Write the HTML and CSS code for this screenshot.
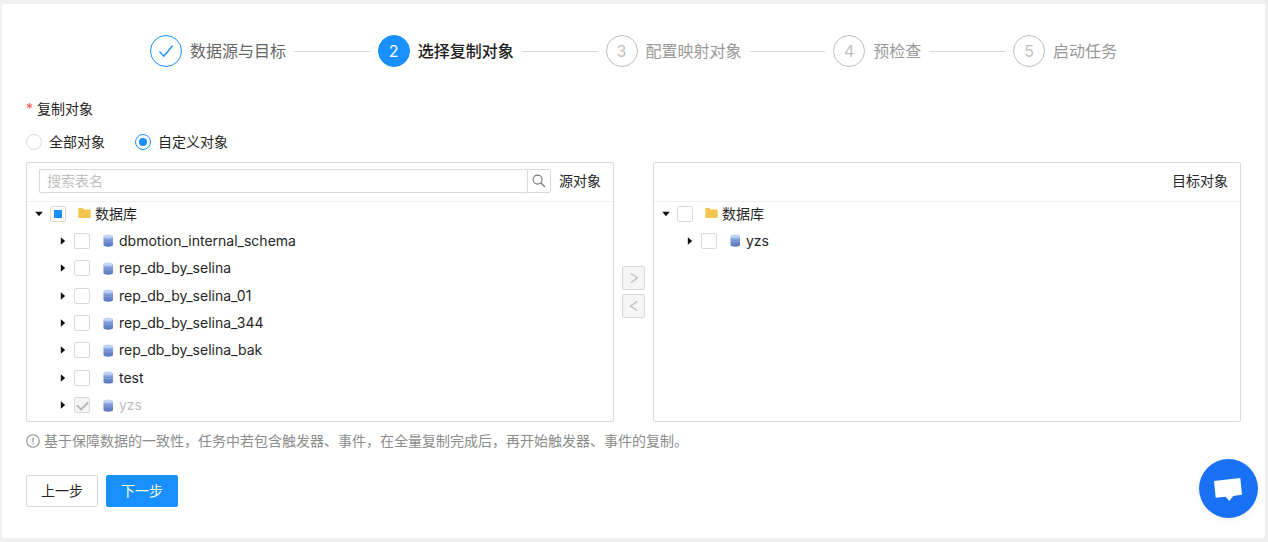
FILE: index.html
```html
<!DOCTYPE html>
<html lang="zh-CN">
<head>
<meta charset="utf-8">
<title>选择复制对象</title>
<link rel="stylesheet" href="styles.css">
</head>
<body>
<svg class="sprite" aria-hidden="true">
  <defs>
    <linearGradient id="dbBody" x1="0" y1="0" x2="0" y2="1">
      <stop offset="0" stop-color="#a9c0ee"/>
      <stop offset="1" stop-color="#5272bd"/>
    </linearGradient>
  </defs>
  <symbol id="db" viewBox="0 0 13 13">
    <path d="M1.500 2.200v8.700c0 2.300 9.500 2.300 9.500 0V2.200z" fill="url(#dbBody)"/>
    <ellipse cx="6.250" cy="2.200" rx="4.750" ry="1.600" fill="#c3d3f5"/>
    <path d="M1.500 5.200c1 1.500 8.500 1.500 9.500 0M1.500 8.100c1 1.500 8.500 1.500 9.500 0" fill="none" stroke="#4c6cb8" stroke-width=".4"/>
  </symbol>
  <symbol id="folder" viewBox="0 0 13 13">
    <path d="M.300 1.700Q.300 1 1 1H4.500L6 2.500H12Q12.700 2.500 12.700 3.200V10.300Q12.700 11 12 11H1Q.300 11 .300 10.300Z" fill="#f2c64f"/>
  </symbol>
  <symbol id="caret" viewBox="0 0 10 10">
    <path d="M2.800 1.200 7.200 5 2.800 8.800Z" fill="#111"/>
  </symbol>
</svg>

<main class="card">
  <ol class="steps">
    <li class="step step-done">
      <span class="step-icon"><svg width="16" height="16" viewBox="0 0 16 16"><path d="M1.500 8.400 5.800 13.200 14.600 2.700" fill="none" stroke="currentColor" stroke-width="1.400"/></svg></span>
      <span class="step-title">数据源与目标</span>
    </li>
    <li class="step step-active"><span class="step-icon">2</span><span class="step-title">选择复制对象</span></li>
    <li class="step"><span class="step-icon">3</span><span class="step-title">配置映射对象</span></li>
    <li class="step"><span class="step-icon">4</span><span class="step-title">预检查</span></li>
    <li class="step"><span class="step-icon">5</span><span class="step-title">启动任务</span></li>
  </ol>

  <form>
    <div class="field-label" id="scope-label"><span class="required">*</span>复制对象</div>
    <div class="radios" role="radiogroup" aria-labelledby="scope-label">
      <label class="option"><input class="radio" type="radio" name="scope">全部对象</label>
      <label class="option"><input class="radio" type="radio" name="scope" checked>自定义对象</label>
    </div>

    <div class="transfer">
      <section class="panel">
        <header class="panel-head">
          <div class="search">
            <input class="search-input" type="text" placeholder="搜索表名" aria-label="搜索表名">
            <button class="search-button" type="button" aria-label="搜索"><svg width="14" height="14" viewBox="0 0 14 14"><path d="M9 9l4 4" stroke="currentColor" stroke-width="1.200"/><circle cx="5.600" cy="5.600" r="4.500" fill="none" stroke="currentColor" stroke-width="1.100"/></svg></button>
          </div>
          <span class="panel-title">源对象</span>
        </header>
        <ul class="tree">
          <li class="node"><button class="toggle open" type="button" aria-label="收起"><svg width="10" height="10"><use href="#caret"/></svg></button><label class="node-label"><input class="check partial" type="checkbox"><svg width="13" height="13"><use href="#folder"/></svg>数据库</label></li>
          <li class="node child"><button class="toggle" type="button" aria-label="展开"><svg width="10" height="10"><use href="#caret"/></svg></button><label class="node-label"><input class="check" type="checkbox"><svg width="13" height="13"><use href="#db"/></svg>dbmotion_internal_schema</label></li>
          <li class="node child"><button class="toggle" type="button" aria-label="展开"><svg width="10" height="10"><use href="#caret"/></svg></button><label class="node-label"><input class="check" type="checkbox"><svg width="13" height="13"><use href="#db"/></svg>rep_db_by_selina</label></li>
          <li class="node child"><button class="toggle" type="button" aria-label="展开"><svg width="10" height="10"><use href="#caret"/></svg></button><label class="node-label"><input class="check" type="checkbox"><svg width="13" height="13"><use href="#db"/></svg>rep_db_by_selina_01</label></li>
          <li class="node child"><button class="toggle" type="button" aria-label="展开"><svg width="10" height="10"><use href="#caret"/></svg></button><label class="node-label"><input class="check" type="checkbox"><svg width="13" height="13"><use href="#db"/></svg>rep_db_by_selina_344</label></li>
          <li class="node child"><button class="toggle" type="button" aria-label="展开"><svg width="10" height="10"><use href="#caret"/></svg></button><label class="node-label"><input class="check" type="checkbox"><svg width="13" height="13"><use href="#db"/></svg>rep_db_by_selina_bak</label></li>
          <li class="node child"><button class="toggle" type="button" aria-label="展开"><svg width="10" height="10"><use href="#caret"/></svg></button><label class="node-label"><input class="check" type="checkbox"><svg width="13" height="13"><use href="#db"/></svg>test</label></li>
          <li class="node child"><button class="toggle" type="button" aria-label="展开"><svg width="10" height="10"><use href="#caret"/></svg></button><label class="node-label disabled"><input class="check" type="checkbox" checked disabled><svg width="13" height="13"><use href="#db"/></svg>yzs</label></li>
        </ul>
      </section>

      <div class="moves">
        <button class="move" type="button" aria-label="移到右侧" disabled><svg width="10" height="10" viewBox="0 0 10 10"><path d="M2 .500 8.500 5 2 9.500" fill="none" stroke="currentColor" stroke-width="1.100"/></svg></button>
        <button class="move" type="button" aria-label="移到左侧" disabled><svg width="10" height="10" viewBox="0 0 10 10"><path d="M8 .500 1.500 5 8 9.500" fill="none" stroke="currentColor" stroke-width="1.100"/></svg></button>
      </div>

      <section class="panel">
        <header class="panel-head"><span class="panel-title">目标对象</span></header>
        <ul class="tree">
          <li class="node"><button class="toggle open" type="button" aria-label="收起"><svg width="10" height="10"><use href="#caret"/></svg></button><label class="node-label"><input class="check" type="checkbox"><svg width="13" height="13"><use href="#folder"/></svg>数据库</label></li>
          <li class="node child"><button class="toggle" type="button" aria-label="展开"><svg width="10" height="10"><use href="#caret"/></svg></button><label class="node-label"><input class="check" type="checkbox"><svg width="13" height="13"><use href="#db"/></svg>yzs</label></li>
        </ul>
      </section>
    </div>

    <p class="note"><svg width="14" height="14" viewBox="0 0 14 14"><circle cx="7" cy="7" r="6.300" fill="none" stroke="currentColor" stroke-width="1.100"/><path d="M7 3.500v4.700M7 9.300v1.300" stroke="currentColor" stroke-width="1.100"/></svg>基于保障数据的一致性，任务中若包含触发器、事件，在全量复制完成后，再开始触发器、事件的复制。</p>

    <div class="actions">
      <button class="btn" type="button">上一步</button>
      <button class="btn btn-primary" type="submit">下一步</button>
    </div>
  </form>
</main>

<button class="chat" type="button" aria-label="在线客服"><svg width="59" height="59" viewBox="0 0 59 59"><path d="M15 22 41.300 19 43 35.700 34.200 37 30.300 42 26.700 37.700 16.700 38.700Z" fill="#fff"/></svg></button>
</body>
</html>
```
FILE: styles.css
```css
* {
  box-sizing: border-box;
}

body {
  margin: 0;
  padding: 4px 3px 4px 2px;
  background: #f0f0f1;
  color: #262626;
  font: 14px/22px Inter, "Noto Sans CJK SC", sans-serif;
}

button,
input {
  margin: 0;
  font: inherit;
  color: inherit;
}

button {
  padding: 0;
  cursor: pointer;
}

ol,
ul {
  margin: 0;
  padding: 0;
  list-style: none;
}

svg {
  display: block;
  flex: none;
}

.sprite {
  position: absolute;
  width: 0;
  height: 0;
}

.card {
  padding: 31px 24px;
  border-radius: 2px;
  background: #fff;
}

/* Steps */
.steps {
  display: flex;
  padding: 0 124px;
  margin-bottom: 31px;
}

.step {
  display: flex;
  flex: 1 1 auto;
  align-items: center;
  gap: 8px;
  color: #999;
  font-size: 16px;
  line-height: 32px;
  white-space: nowrap;
}

.step:last-child {
  flex: none;
}

.step:not(:last-child)::after {
  content: "";
  flex: 1;
  height: 1px;
  margin-right: 8px;
  background: #d9d9d9;
}

.step-icon {
  display: flex;
  align-items: center;
  justify-content: center;
  width: 32px;
  height: 32px;
  border: 1px solid #bfbfbf;
  border-radius: 50%;
  color: #bfbfbf;
}

.step-done {
  color: #666;
}

.step-done .step-icon {
  border-color: #1890ff;
  color: #1890ff;
}

.step-active {
  color: #222;
}

.step-active .step-title {
  font-weight: 500;
}

.step-active .step-icon {
  border-color: #1890ff;
  background: #1890ff;
  color: #fff;
}

/* Scope */
.required {
  margin-right: 4px;
  color: #ff4d4f;
}

.radios {
  display: flex;
  gap: 30px;
  margin: 11px 0 9px;
}

.option {
  display: flex;
  align-items: center;
  gap: 7px;
}

.radio,
.check {
  appearance: none;
  display: grid;
  place-content: center;
  flex: none;
  width: 16px;
  height: 16px;
  border: 1px solid #d9d9d9;
  background: #fff;
}

.radio {
  border-radius: 50%;
}

.radio:checked {
  border-color: #1890ff;
}

.radio:checked::before {
  content: "";
  width: 8px;
  height: 8px;
  border-radius: 50%;
  background: #1890ff;
}

.check {
  margin-right: 8px;
  border-radius: 2px;
}

.check.partial::before {
  content: "";
  width: 8px;
  height: 8px;
  background: #1890ff;
}

.check:disabled {
  background: #f5f5f5;
}

.check:disabled:checked::before {
  content: "";
  width: 9px;
  height: 5px;
  border: solid #b8b8b8;
  border-width: 0 0 2px 2px;
  transform: translateY(-1px) rotate(-45deg);
}

/* Transfer */
.transfer {
  display: grid;
  grid-template-columns: 1fr 23px 1fr;
  gap: 8px;
}

.panel {
  border: 1px solid #d9d9d9;
  border-radius: 2px;
}

.panel-head {
  display: flex;
  align-items: center;
  justify-content: flex-end;
  gap: 8px;
  height: 39px;
  padding: 0 12px 2px;
  border-bottom: 1px solid #f0f0f0;
}

.search {
  display: flex;
  flex: 1;
  height: 24px;
}

.search-input {
  flex: 1;
  min-width: 0;
  padding: 0 7px;
  border: 1px solid #d9d9d9;
  border-right: 0;
  border-radius: 2px 0 0 2px;
}

.search-input::placeholder {
  color: #bfbfbf;
}

.search-button {
  display: grid;
  place-content: center;
  width: 24px;
  border: 1px solid #d9d9d9;
  border-radius: 0 2px 2px 0;
  background: #fff;
  color: #777;
}

.tree {
  display: grid;
  grid-template-rows: repeat(8, 1fr);
  height: 219px;
}

.node {
  display: flex;
  align-items: center;
  height: 23px;
}

.child {
  padding-left: 24px;
}

.node-label {
  display: flex;
  align-items: center;
  gap: 4px;
}

.disabled {
  color: #bfbfbf;
}

.toggle {
  display: grid;
  place-content: center;
  width: 23px;
  height: 23px;
  border: 0;
  background: none;
}

.toggle.open svg {
  transform: rotate(90deg);
}

.moves {
  display: flex;
  flex-direction: column;
  justify-content: center;
  gap: 4px;
}

.move {
  display: grid;
  place-content: center;
  height: 24px;
  border: 1px solid #d9d9d9;
  border-radius: 2px;
  background: #f5f5f5;
  color: #b8b8b8;
}

.note {
  display: flex;
  align-items: center;
  gap: 4px;
  margin: 8px 0 23px;
  color: #8c8c8c;
}

.actions {
  display: flex;
  gap: 8px;
}

.btn {
  height: 32px;
  padding: 0 14px;
  border: 1px solid #d9d9d9;
  border-radius: 2px;
  background: #fff;
}

.btn-primary {
  border-color: #1890ff;
  background: #1890ff;
  color: #fff;
}

.chat {
  position: fixed;
  right: 10px;
  bottom: 24px;
  border: 0;
  border-radius: 50%;
  background: #1972f5;
  box-shadow: 0 2px 8px rgba(0, 0, 0, 0.06);
}
```
